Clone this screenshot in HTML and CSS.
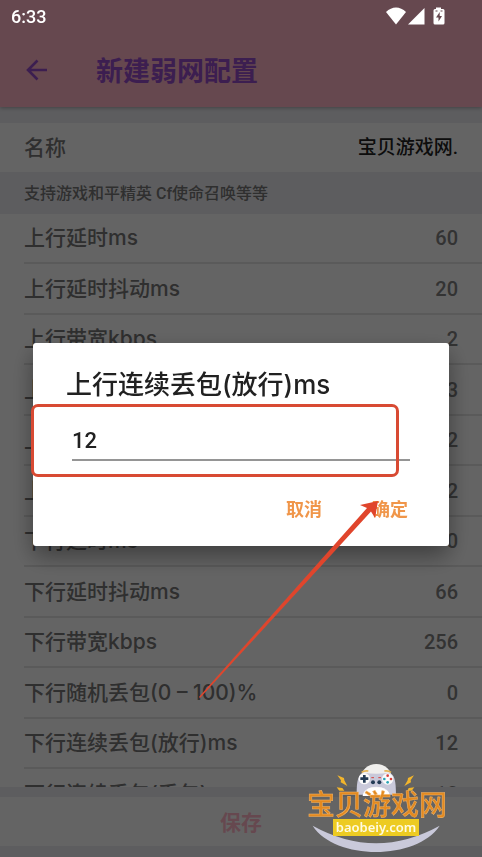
FILE: index.html
```html
<!DOCTYPE html>
<html lang="zh-CN">
<head>
  <meta charset="UTF-8">
  <title>新建弱网配置</title>
  <meta name="viewport" content="width=device-width, initial-scale=1.0">
  <link rel="stylesheet" href="styles.css">
</head>
<body>

  <div class="app">
    <header class="toolbar">
      <button class="back" type="button" aria-label="返回">
        <svg width="22" height="22" viewBox="0 0 22 22"><path d="M11.500 1.500 2 11l9.500 9.500M2 11h19" fill="none" stroke="currentColor" stroke-width="2.600"/></svg>
      </button>
      <h1>新建弱网配置</h1>
    </header>

    <div class="row name-row">
      <span class="label">名称</span>
      <span class="name">宝贝游戏网.</span>
    </div>
    <p class="section">支持游戏和平精英 Cf使命召唤等等</p>

    <ul class="list">
      <li class="row"><span class="label">上行延时ms</span><span class="value">60</span></li>
      <li class="row"><span class="label">上行延时抖动ms</span><span class="value">20</span></li>
      <li class="row"><span class="label">上行带宽kbps</span><span class="value">2</span></li>
      <li class="row"><span class="label">上行随机丢包(0 – 100)%</span><span class="value">3</span></li>
      <li class="row"><span class="label">上行连续丢包(放行)ms</span><span class="value">2</span></li>
      <li class="row"><span class="label">上行连续丢包(丢包)ms</span><span class="value">2</span></li>
      <li class="row"><span class="label">下行延时ms</span><span class="value">0</span></li>
      <li class="row"><span class="label">下行延时抖动ms</span><span class="value">66</span></li>
      <li class="row"><span class="label">下行带宽kbps</span><span class="value">256</span></li>
      <li class="row"><span class="label">下行随机丢包(0 – 100)%</span><span class="value">0</span></li>
      <li class="row"><span class="label">下行连续丢包(放行)ms</span><span class="value">12</span></li>
      <li class="row"><span class="label">下行连续丢包(丢包)</span><span class="value">12</span></li>
    </ul>

    <button class="save" type="button">保存</button>
  </div>

  <div class="overlay">
    <div class="status">
      <span class="clock">6:33</span>
      <svg class="status-icons" width="60" height="18" viewBox="0 0 60 18" fill="#fff">
        <path d="M0 5C6-1 14-1 20 5L10 17.500Z"/>
        <path d="M22 17.500 38.500 1V17.500Z"/>
        <path d="M50 2V.5h5V2h2q1.500 0 1.500 1.500V16q0 1.500-1.500 1.500h-8q-1.500 0-1.500-1.500V3.500Q47.500 2 49 2Z"/>
        <path d="M53.700 5 50 10.500h2.500v4L56 9h-2.300ZM49.500 3.500h2v1h-2ZM54.500 3.500h2v1h-2Z" fill="#66484f"/>
      </svg>
    </div>

    <div class="dialog-area">
      <form class="dialog" role="dialog" aria-labelledby="dialogTitle">
        <h2 id="dialogTitle"><label for="amount">上行连续丢包(放行)ms</label></h2>
        <input id="amount" type="text" value="12">
        <div class="actions">
          <button type="button">取消</button>
          <button type="button">确定</button>
        </div>
        <div class="highlight"></div>
        <svg class="arrow" width="182" height="200" viewBox="0 0 182 200">
          <path d="M0 198 168 9 161 6 179 2 176 19 172 12.500 1 199Z" fill="#e0452c"/>
        </svg>
      </form>
    </div>
  </div>

  <svg class="logo" width="150" height="94" viewBox="0 0 150 94">
    <g transform="scale(.3333) translate(-39 -30)">
      <path d="M68 227Q258 332 449 227C380 332 135 332 68 227Z" fill="#c9c9da"/>
      <ellipse cx="259" cy="84" rx="46" ry="42" fill="#f0efed"/>
      <path d="M215 67q8-6 20-4M283 63q12-2 20 4" fill="none" stroke="#e3b352" stroke-width="5"/>
      <path d="M222 68q37 6 74 0c18 4 22 24 22 66h-22q-5-24-37-24t-37 24h-22c0-42 4-62 22-66Z" fill="#c9c9da"/>
      <path d="M218 138q3-26 41-26t41 26Z" fill="#fff"/>
      <circle cx="223" cy="86" r="17" fill="#fafafa"/>
      <circle cx="293" cy="87" r="17" fill="#fafafa"/>
      <path d="M219 75h8v7h8v8h-8v8h-8v-8h-8v-8h8Z" fill="#233b55"/>
      <circle cx="293" cy="77" r="4" fill="#d9403c"/>
      <circle cx="303" cy="87" r="4" fill="#d9403c"/>
      <circle cx="293" cy="97" r="4" fill="#2ba3b5"/>
      <circle cx="283" cy="87" r="4" fill="#2ba3b5"/>
      <path d="M244 83h8M265 83h8" stroke="#d9403c" stroke-width="3"/>
      <circle cx="249" cy="97" r="6" fill="#233b55"/>
      <circle cx="268" cy="97" r="6" fill="#233b55"/>
      <path d="M142 76 162 84 163 91 172 108 152 97 153 91ZM140 112l17 2 6 8-15 0Z" fill="#f2b52c"/>
      <path d="M372 76 354 84 353 91 343 108 363 97 362 91ZM373 112l-17 2-4 8 13 0Z" fill="#f2b52c"/>
    </g>
    <text class="logo-name" x="4" y="55">宝贝游戏网</text>
    <rect x="30" y="59" width="86" height="17" fill="#edcb22"/>
    <text class="logo-site" x="73" y="72" text-anchor="middle">baobeiy.com</text>
  </svg>

</body>
</html>
```
FILE: styles.css
```css
* {
  box-sizing: border-box;
}

body {
  margin: 0;
  font-family: Roboto, "Noto Sans CJK SC", sans-serif;
  font-weight: 500;
  background: #e9e9ee;
}

h1,
h2,
p,
ul {
  margin: 0;
  padding: 0;
}

button {
  border: none;
  background: none;
  padding: 0;
  font: inherit;
  cursor: pointer;
}

.app {
  display: flex;
  flex-direction: column;
  height: 100vh;
}

.toolbar {
  display: flex;
  align-items: center;
  gap: 48px;
  flex: none;
  height: 107px;
  margin-bottom: 16px;
  padding: 32px 27px 0 26px;
  background: #ffb4c6;
  color: #964bc8;
  box-shadow: 0 1px 4px rgba(0, 0, 0, 0.3);
}

.back {
  display: flex;
  color: inherit;
}

h1 {
  font-size: 27px;
  font-weight: 600;
}

.row {
  display: flex;
  align-items: center;
  justify-content: space-between;
  flex: none;
  height: 50px;
  padding-right: 24px;
  border-bottom: 2px solid #e2e2e2;
}

.row:nth-child(even) {
  height: 51px;
}

.label {
  font-family: Inter, "Noto Sans CJK SC", sans-serif;
  font-size: 21px;
  line-height: 28px;
  color: #757575;
}

.value {
  font-size: 20px;
  line-height: 28px;
  color: #808080;
}

.name-row.row {
  height: 49px;
  padding-left: 24px;
  border: none;
  background: #fbfbfb;
}

.name {
  font-size: 19px;
  line-height: 28px;
  color: #222;
}

.section {
  flex: none;
  padding: 2px 24px 0;
  font-size: 16px;
  line-height: 40px;
  color: #757575;
}

.list {
  display: flex;
  flex-direction: column;
  flex: 1;
  min-height: 0;
  overflow: hidden;
  padding-left: 24px;
  list-style: none;
  background: #fbfbfb;
}

.save {
  flex: none;
  height: 49px;
  margin: 10px 0 11px;
  padding-bottom: 2px;
  background: #fbfbfb;
  font-size: 21px;
  font-weight: 600;
  color: #ffb4c6;
}

.overlay {
  position: fixed;
  inset: 0;
  display: flex;
  flex-direction: column;
  background: rgba(0, 0, 0, 0.6);
}

.status {
  display: flex;
  align-items: center;
  justify-content: space-between;
  height: 32px;
  padding: 0 36px 0 11px;
  color: #fff;
}

.clock {
  font-size: 18px;
}

.dialog-area {
  display: flex;
  align-items: center;
  flex: 1;
  padding: 0 33px;
}

.dialog {
  position: relative;
  flex: 1;
  padding: 24px 39px 18px 33px;
  border-radius: 3px;
  background: #fff;
  box-shadow: 0 10px 24px rgba(0, 0, 0, 0.4);
}

h2 {
  font-family: Inter, "Noto Sans CJK SC", sans-serif;
  font-size: 26px;
  font-weight: 500;
  line-height: 36px;
  color: #212121;
}

#amount {
  display: block;
  width: calc(100% - 6px);
  height: 40px;
  margin: 18px 0 0 6px;
  padding: 0;
  border: none;
  border-bottom: 2px solid #959595;
  background: none;
  font: inherit;
  font-size: 22px;
  color: #212121;
  outline: none;
}

.actions {
  display: flex;
  justify-content: flex-end;
  gap: 50px;
  margin: 31px 2px 0 0;
}

.actions button {
  font-size: 18px;
  font-weight: 600;
  line-height: 36px;
  color: #f0964a;
}

.highlight {
  position: absolute;
  top: 61px;
  left: -2px;
  right: 50px;
  height: 73px;
  border: 3px solid #d84a33;
  border-radius: 7px;
  pointer-events: none;
}

.arrow {
  position: absolute;
  top: 156px;
  left: 166px;
  pointer-events: none;
}

.logo {
  position: fixed;
  right: 29px;
  bottom: 3px;
}

.logo-name {
  font-size: 28px;
  fill: #e38a20;
  stroke: #f0b368;
  stroke-width: 0.5px;
}

.logo-site {
  font-family: "Noto Sans", sans-serif;
  font-size: 13px;
  font-weight: 600;
  fill: #fffbe0;
}
```
